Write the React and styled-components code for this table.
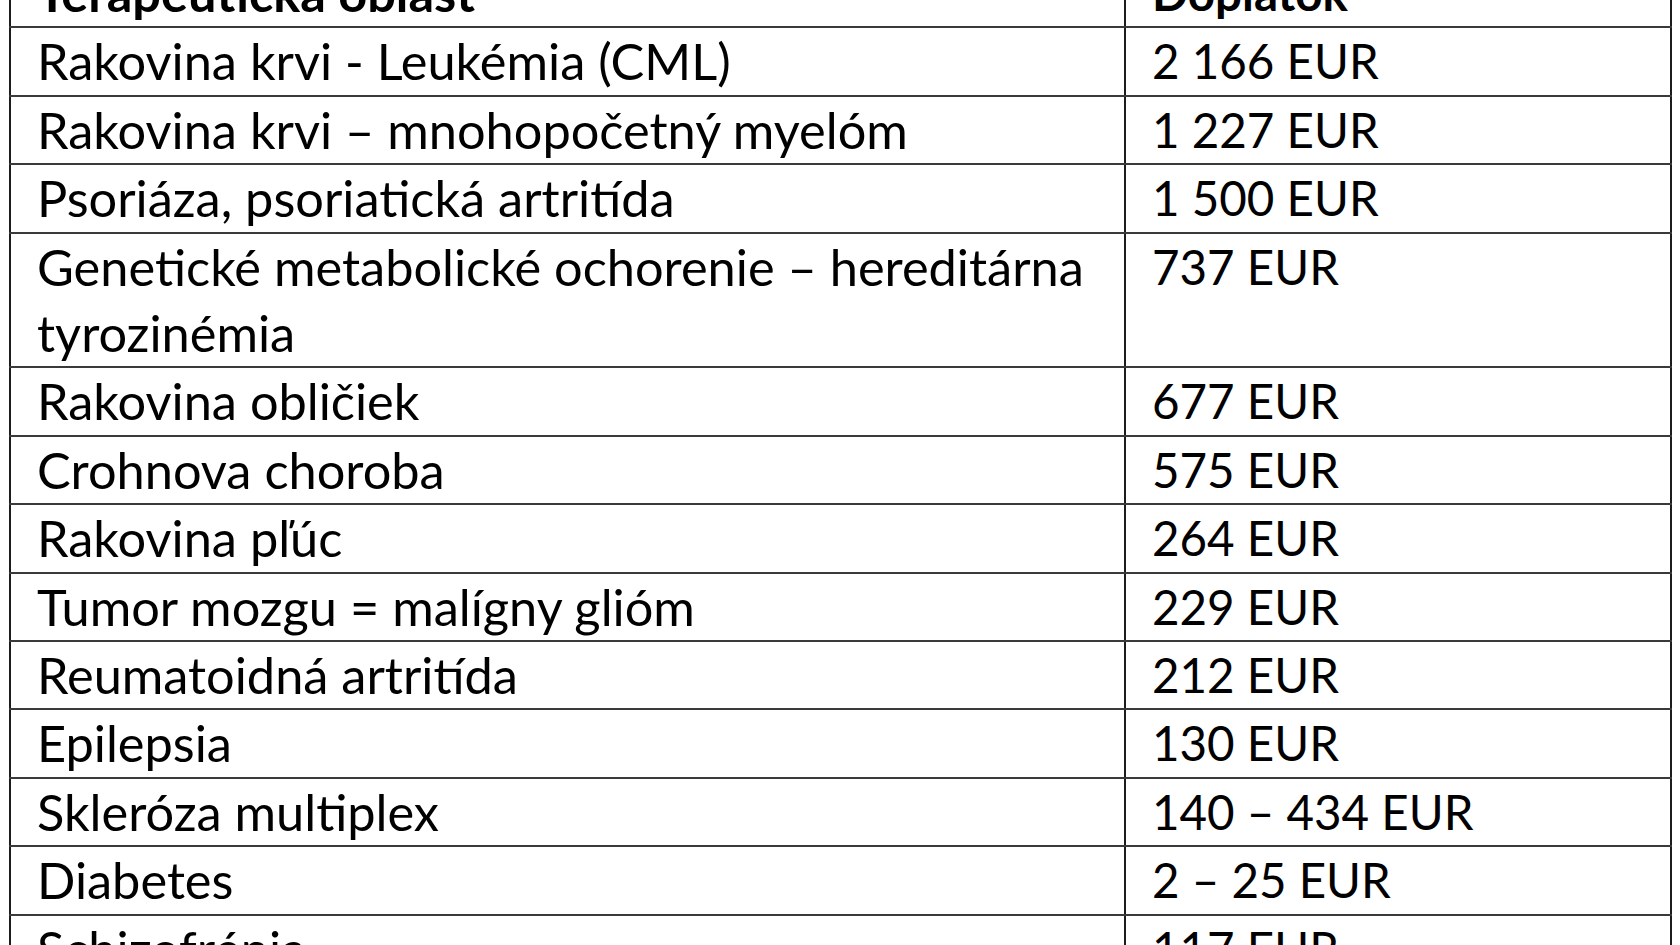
import React from "react";
import styled, { createGlobalStyle } from "styled-components";

const GlobalStyle = createGlobalStyle`
  html, body {
    margin: 0;
    padding: 0;
    background: #fff;
    overflow: hidden;
  }
  body {
    font-family: Lato, "Liberation Sans", sans-serif;
    color: #000;
  }
`;

const Page = styled.div`
  width: 1680px;
  height: 945px;
  overflow: hidden;
  padding-left: 9px;
  box-sizing: border-box;
`;

const Table = styled.table`
  border-collapse: collapse;
  width: 1661px;
  margin-top: -42px;
  table-layout: fixed;
`;

const Col = styled.col`
  width: ${(p) => p.$w}px;
`;

// area names are set a little larger than prices to follow the original's widths
const Cell = styled.td`
  border: 2px solid #1c1c1c;
  border-top-color: #3a3a3a;
  border-bottom-color: #3a3a3a;
  padding: 0 20px 0 26px;
  font-size: ${(p) => (p.$price ? 47.5 : 50.5)}px;
  line-height: 66.4px;
  font-weight: ${(p) => (p.$head ? 700 : 400)};
  text-align: left;
  vertical-align: top;
  white-space: normal;
`;

const rows = [
  ["Rakovina krvi - Leukémia (CML)", "2 166 EUR"],
  ["Rakovina krvi – mnohopočetný myelóm", "1 227 EUR"],
  ["Psoriáza, psoriatická artritída", "1 500 EUR"],
  ["Genetické metabolické ochorenie – hereditárna tyrozinémia", "737 EUR"],
  ["Rakovina obličiek", "677 EUR"],
  ["Crohnova choroba", "575 EUR"],
  ["Rakovina pľúc", "264 EUR"],
  ["Tumor mozgu = malígny glióm", "229 EUR"],
  ["Reumatoidná artritída", "212 EUR"],
  ["Epilepsia", "130 EUR"],
  ["Skleróza multiplex", "140 – 434 EUR"],
  ["Diabetes", "2 – 25 EUR"],
  ["Schizofrénia", "117 EUR"],
];

export default function App() {
  return (
    <Page>
      <GlobalStyle />
      <Table>
        <colgroup>
          <Col $w={1115} />
          <Col $w={546} />
        </colgroup>
        <thead>
          <tr>
            <Cell as="th" $head>Terapeutická oblasť</Cell>
            <Cell as="th" $head $price>Doplatok</Cell>
          </tr>
        </thead>
        <tbody>
          {rows.map(([area, price], i) => (
            <tr key={i}>
              <Cell>{area}</Cell>
              <Cell $price>{price}</Cell>
            </tr>
          ))}
        </tbody>
      </Table>
    </Page>
  );
}
